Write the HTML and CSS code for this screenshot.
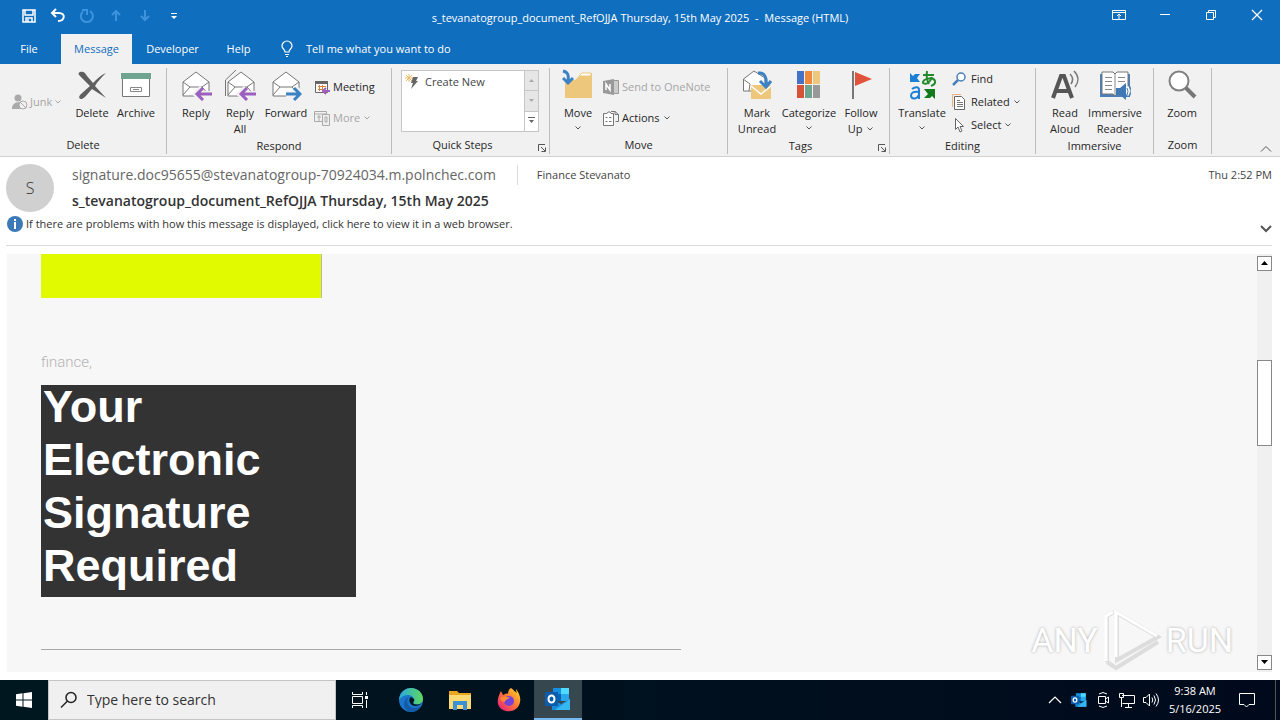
FILE: index.html
```html
<!DOCTYPE html>
<html lang="en">
<head>
    <meta charset="UTF-8">
    <title>s_tevanatogroup_document_RefOJJA Thursday, 15th May 2025 - Message (HTML)</title>
    <link rel="stylesheet" href="styles.css">
</head>
<body>
    <svg class="defs" aria-hidden="true">
        <symbol id="envelope" viewBox="0 0 32 32">
            <path d="M3 13 16 3 29 13V27H3Z" fill="#fff" stroke="#777"/>
            <path d="M3 13 10 18H22L29 13M10 18 3 26M22 18 29 26" fill="none" stroke="#777"/>
        </symbol>
        <symbol id="arrow-down" viewBox="0 0 8 8">
            <path d="M1.5 2.5 4 5 6.5 2.5" fill="none" stroke="currentColor"/>
        </symbol>
        <symbol id="launcher" viewBox="0 0 10 10">
            <path d="M1.5 8V1.5H8M4 4 8 8M8.5 4.5V8.5H4.5" fill="none" stroke="#555"/>
        </symbol>
        <symbol id="outlook" viewBox="0 0 26 24">
            <path d="M8 1H24V14H8Z" fill="#1490df"/>
            <path d="M16 1H24V7H16Z" fill="#50d9ff"/>
            <path d="M8 7H16V14H8Z" fill="#0364b8"/>
            <path d="M16 7H24V14H16Z" fill="#28a8ea"/>
            <path d="M7 12 16 17 25 12V23H7Z" fill="#1b8ad8"/>
            <path d="M25 12V23H10Z" fill="#35b8f1"/>
            <rect x="0" y="5" width="13" height="14" rx="1" fill="#0a5cad"/>
            <ellipse cx="6.5" cy="12" rx="3" ry="3.5" fill="none" stroke="#fff" stroke-width="2"/>
        </symbol>
    </svg>

    <header class="titlebar">
        <div class="quick-access">
            <button aria-label="Save"><svg width="16" height="16" fill="none" stroke="#fff" stroke-width="1.5"><path d="M2 2H14V14H2ZM4 2V7H12V2M5 14V10H11V14M7 11V14"/></svg></button>
            <button aria-label="Undo"><svg width="16" height="16" fill="none" stroke="#fff" stroke-width="2"><path d="M6 1 2 5 6 9M2 5H9C16 5 15 13 8 13"/></svg></button>
            <button aria-label="Redo" disabled><svg width="16" height="16" fill="none" stroke="#3d94dc" stroke-width="2"><path d="M4 3.5A6 6 0 1 0 11 3M3 2H8V7"/></svg></button>
            <button aria-label="Previous item" disabled><svg width="16" height="16" fill="none" stroke="#3d94dc" stroke-width="2"><path d="M8 13V3M4 7 8 3 12 7"/></svg></button>
            <button aria-label="Next item" disabled><svg width="16" height="16" fill="none" stroke="#3d94dc" stroke-width="2"><path d="M8 2V12M4 8 8 12 12 8"/></svg></button>
            <button aria-label="Customize"><svg width="8" height="8" fill="#fff"><path d="M1 1H7V2H1ZM1 4H7L4 7Z"/></svg></button>
        </div>
        <div class="title">s_tevanatogroup_document_RefOJJA Thursday, 15th May 2025&nbsp; -&nbsp; Message (HTML)</div>
        <div class="window-controls">
            <button aria-label="Ribbon display options"><svg width="14" height="12" fill="none" stroke="#fff"><path d="M.5 1.5H13.5V10.5H.5ZM.5 3.5H13.5M7 10V5M5 7 7 5 9 7"/></svg></button>
            <button aria-label="Minimize"><svg width="12" height="12" stroke="#fff"><path d="M1 5.5H11"/></svg></button>
            <button aria-label="Restore"><svg width="12" height="12" fill="none" stroke="#fff"><path d="M1.5 3.5H8.5V10.5H1.5ZM3.5 3.5V1.5H10.5V8.5H8.5"/></svg></button>
            <button aria-label="Close"><svg width="12" height="12" stroke="#fff" stroke-width="1.2"><path d="M1 1 11 11M11 1 1 11"/></svg></button>
        </div>
    </header>

    <nav class="tabs">
        <a href="#" class="tab tab-file">File</a>
        <a href="#" class="tab tab-message active">Message</a>
        <a href="#" class="tab tab-developer">Developer</a>
        <a href="#" class="tab tab-help">Help</a>
        <a href="#" class="tell-me">
            <svg width="14" height="18" fill="none" stroke="#fff" stroke-width="1.2"><path d="M5 12C5 9 2 9 2 6A5 5 0 0 1 12 6C12 9 9 9 9 12ZM5 14.5H9M6 16.5H8"/></svg>
            Tell me what you want to do
        </a>
    </nav>

    <div class="ribbon">
        <section class="group group-delete">
            <div class="group-items">
                <div class="small-list junk">
                    <button class="small" disabled><svg width="16" height="16"><circle cx="6" cy="4" r="3.5" fill="#aaa"/><path d="M0 14C0 8 9 7 10 10V15H0Z" fill="#aaa"/><circle cx="11" cy="11" r="4" fill="#f1f1f1" stroke="#aaa"/><path d="M8 8 14 14" stroke="#aaa"/></svg>Junk<svg class="caret"><use href="#arrow-down"/></svg></button>
                </div>
                <button class="large"><svg width="32" height="32"><path d="M4 3C7 2 9 3 11 7L17 14C21 10 25 6 30 4 25 9 21 13 19 17L30 29 16 20C12 24 10 28 6 30 3 30 2 28 5 25L14 17 4 7C2 5 2 4 4 3Z" fill="#5f5f5f"/></svg>Delete</button>
                <button class="large"><svg width="32" height="32"><path d="M2.5 9.5H29.5V27.5H2.5Z" fill="#fff" stroke="#777"/><path d="M1 4H31V10H1Z" fill="#6fa491"/><path d="M10.5 18.5H21.5V22.5H10.5ZM13 20.5H19" fill="none" stroke="#888"/></svg>Archive</button>
            </div>
            <h2>Delete</h2>
        </section>

        <section class="group group-respond">
            <div class="group-items">
                <button class="large"><svg width="32" height="32"><use href="#envelope"/><path d="M16 25H32M22 19 16 25 22 31" fill="none" stroke="#f1f1f1" stroke-width="6"/><path d="M17 25H32M23 19 17 25 23 31" fill="none" stroke="#9b5fc0" stroke-width="3"/></svg>Reply</button>
                <button class="large"><svg width="32" height="32"><path d="M1.5 27V11L12 1" fill="none" stroke="#777"/><use href="#envelope" x="1"/><path d="M16 25H32M22 19 16 25 22 31" fill="none" stroke="#f1f1f1" stroke-width="6"/><path d="M17 25H32M23 19 17 25 23 31" fill="none" stroke="#9b5fc0" stroke-width="3"/></svg>Reply<br>All</button>
                <button class="large wide"><svg width="32" height="32"><use href="#envelope"/><path d="M16 25H31M25 19 31 25 25 31" fill="none" stroke="#f1f1f1" stroke-width="6"/><path d="M16 25H30M24 19 30 25 24 31" fill="none" stroke="#3b82c4" stroke-width="3"/></svg>Forward</button>
                <div class="small-list">
                    <button class="small"><svg width="16" height="16"><path d="M1.5 3.5H13.5V13.5H1.5Z" fill="#fff" stroke="#666"/><path d="M1 2H14V5H1Z" fill="#666"/><path d="M4 7.5H12M4 10.5H9M5.5 6V12M8.5 6V12" stroke="#d9833c"/><path d="M16 12H9M12 9 9 12 12 15" fill="none" stroke="#9b5fc0" stroke-width="2"/></svg>Meeting</button>
                    <button class="small" disabled><svg width="16" height="16" fill="none" stroke="#aaa"><path d="M.5 1.5H12.5V11.5H.5ZM1 4H12M3 7H7M5 5V11" /><path d="M8.5 4.5H15.5V15.5H8.5Z" fill="#eee"/><path d="M11 7H13V12H11Z"/></svg>More<svg class="caret"><use href="#arrow-down"/></svg></button>
                </div>
            </div>
            <h2>Respond</h2>
        </section>

        <section class="group group-steps">
            <div class="group-items">
                <div class="gallery">
                    <button class="step"><svg width="16" height="16"><path d="M4 0V8M0 4H8M1 1 7 7M7 1 1 7" stroke="#eeb868"/><path d="M8 3H13L11 7H13L6 15 8 9H6Z" fill="#666"/></svg>Create New</button>
                    <div class="gallery-scroll">
                        <button disabled aria-label="Scroll up"><svg width="7" height="7" fill="#aaa"><path d="M1 5H6L3.5 2Z"/></svg></button>
                        <button disabled aria-label="Scroll down"><svg width="7" height="7" fill="#aaa"><path d="M1 2H6L3.5 5Z"/></svg></button>
                        <button aria-label="More steps"><svg width="7" height="8" fill="#666"><path d="M0 0H7V1H0ZM1 3H6L3.5 6Z"/></svg></button>
                    </div>
                </div>
            </div>
            <h2>Quick Steps</h2>
            <button class="launcher" aria-label="Manage quick steps"><svg width="10" height="10"><use href="#launcher"/></svg></button>
        </section>

        <section class="group group-move">
            <div class="group-items">
                <button class="large wide"><svg width="32" height="32"><path d="M3 11H13L18 6 20 4H30V29H3Z" fill="#ecc77c"/><path d="M18 6 20 4H29V7H17Z" fill="#fff" stroke="#ecc77c"/><path d="M1 2C6 3 7 6 6 13M1 9 6 14 11 9" fill="none" stroke="#3b82c4" stroke-width="3"/></svg>Move<svg class="caret"><use href="#arrow-down"/></svg></button>
                <div class="small-list">
                    <button class="small" disabled><svg width="16" height="16"><path d="M5 1.5H15.5V14.5H5" fill="#ccc" stroke="#999"/><path d="M0 2 11 0V16L0 14Z" fill="#999"/><path d="M3 11V5L7 11V5" fill="none" stroke="#fff" stroke-width="1.5"/></svg>Send to OneNote</button>
                    <button class="small"><svg width="16" height="16" fill="none" stroke="#777"><path d="M.5 3.5H4L5 2H7L8 3.5H10.5V15.5H.5Z" fill="#fff"/><path d="M2.5 7.5H4.500M2.5 11.5H4.500M6 7.5H8.500M6 11.5H8.500M8 1.5H12L15.5 4.500V11.5H12.500M12 1.5V4.500H15.5"/></svg>Actions<svg class="caret"><use href="#arrow-down"/></svg></button>
                </div>
            </div>
            <h2>Move</h2>
        </section>

        <section class="group group-tags">
            <div class="group-items">
                <button class="large"><svg width="32" height="32"><path d="M2.5 10 13 2 24 9V22H2.5Z" fill="#fff" stroke="#777"/><path d="M2 10 9 15 8 22" fill="none" stroke="#777"/><path d="M10 16H30V30H10Z" fill="#ecc77c"/><path d="M10 17 20 25 30 17" fill="none" stroke="#fff" stroke-width="1.5"/><path d="M17 4C24 3 26 9 25 17M19 12 25 18 30 12" fill="none" stroke="#3b82c4" stroke-width="3"/></svg>Mark<br>Unread</button>
                <button class="large widest"><svg width="32" height="32"><path d="M4 2H11V15H4Z" fill="#4472c4"/><path d="M12 2H19V15H12Z" fill="#ef8a3c"/><path d="M20 2H27V15H20Z" fill="#ecc77c"/><path d="M4 16H11V29H4Z" fill="#d6533a"/><path d="M12 16H19V29H12Z" fill="#6fa491"/><path d="M20 16H27V29H20Z" fill="#999"/></svg>Categorize<svg class="caret"><use href="#arrow-down"/></svg></button>
                <button class="large"><svg width="32" height="32"><path d="M8 2V30" stroke="#777" stroke-width="2"/><path d="M10 3 27 10 10 17Z" fill="#e0523b"/></svg>Follow<span>Up<svg class="caret"><use href="#arrow-down"/></svg></span></button>
            </div>
            <h2>Tags</h2>
            <button class="launcher" aria-label="Tag options"><svg width="10" height="10"><use href="#launcher"/></svg></button>
        </section>

        <section class="group group-editing">
            <div class="group-items">
                <button class="large wide"><svg width="32" height="32"><path d="M4 4 7 7 9 5H14L11 9 14 13H4Z" fill="#1b7fd6"/><path d="M6 20C10 17 13 18 13 21V30M13 23C7 22 5 24 5 27 6 31 11 30 13 26" fill="none" stroke="#1b7fd6" stroke-width="2"/><path d="M17 6H28M21 2C20 9 21 12 23 15M26 8C24 14 20 16 17 14 16 10 27 7 29 12 30 15 27 16 25 17" fill="none" stroke="#23892b" stroke-width="2"/><path d="M18 20H29V30L26 27 24 29H18L22 25Z" fill="#117a1c"/></svg>Translate<svg class="caret"><use href="#arrow-down"/></svg></button>
                <div class="small-list three">
                    <button class="small"><svg width="16" height="16" fill="none" stroke="#4a7fba"><circle cx="9" cy="6" r="4" fill="#fff" stroke-width="1.5"/><path d="M6 9 1 14" stroke-width="2.5"/></svg>Find</button>
                    <button class="small"><svg width="16" height="16" fill="none"><path d="M.5 13V.5H9" stroke="#edb282"/><path d="M2.5 2.5H9.5L12.5 5.5V15.5H2.5Z" fill="#fff" stroke="#666"/><path d="M5 6.5H8M5 8.5H11M5 10.5H11M5 12.5H11" stroke="#777"/></svg>Related<svg class="caret"><use href="#arrow-down"/></svg></button>
                    <button class="small"><svg width="16" height="16"><path d="M3.5 1.5V12.5L6 10 8 15 10 14 8 9.5H11.5Z" fill="#fff" stroke="#666"/></svg>Select<svg class="caret"><use href="#arrow-down"/></svg></button>
                </div>
            </div>
            <h2>Editing</h2>
        </section>

        <section class="group group-immersive">
            <div class="group-items">
                <button class="large"><svg width="32" height="32"><path d="M4 29 12 7H15L23 29M7 22H20" fill="none" stroke="#555" stroke-width="4"/><path d="M21 5C24 8 24 12 22 15M25 2C30 7 30 13 26 18" fill="none" stroke="#777" stroke-width="1.5"/></svg>Read<br>Aloud</button>
                <button class="large wider"><svg width="32" height="32"><path d="M1 5H31V28H1Z" fill="#4a7fba"/><path d="M3 3H14L16 5 18 3H29V25H18L16 27 14 25H3Z" fill="#fff" stroke="#777"/><path d="M16 5V26M6 8.5H13M6 12.5H13M6 16.5H13M6 20.5H13M19 8.5H26M19 12.5H26" stroke="#888"/><path d="M17 19H21L27 14V31L21 26H17Z" fill="#3f78b5"/><path d="M28 18Q31 22 28 26" fill="none" stroke="#fff" stroke-width="3"/><path d="M28 19Q30 22 28 26M30 16Q34 22 30 28" fill="none" stroke="#3f78b5"/></svg>Immersive<br>Reader</button>
            </div>
            <h2>Immersive</h2>
        </section>

        <section class="group group-zoom">
            <div class="group-items">
                <button class="large wider"><svg width="32" height="32"><circle cx="13" cy="12" r="9.5" fill="#fff" stroke="#808080" stroke-width="2"/><path d="M20 19 29 28" stroke="#777" stroke-width="4"/></svg>Zoom</button>
            </div>
            <h2>Zoom</h2>
        </section>
        <button class="collapse" aria-label="Collapse the ribbon"><svg width="12" height="8" fill="none" stroke="#555"><path d="M1 6.5 6 1.5 11 6.5"/></svg></button>
    </div>

    <section class="message-head">
        <div class="envelope-info">
            <div class="avatar">S</div>
            <div class="lines">
                <div class="people">
                    <span class="from">signature.doc95655@stevanatogroup-70924034.m.polnchec.com</span>
                    <span class="to">Finance Stevanato</span>
                    <time>Thu 2:52 PM</time>
                </div>
                <h1>s_tevanatogroup_document_RefOJJA Thursday, 15th May 2025</h1>
            </div>
        </div>
        <div class="notice">
            <svg width="16" height="16"><circle cx="8" cy="8" r="8" fill="#3b79b7"/><path d="M7 3H9V5H7ZM7 6H9V13H7Z" fill="#fff"/></svg>
            <a href="#">If there are problems with how this message is displayed, click here to view it in a web browser.</a>
            <button aria-label="Expand header"><svg width="12" height="8" fill="none" stroke="#555" stroke-width="2"><path d="M1 1 6 6 11 1"/></svg></button>
        </div>
    </section>

    <main class="message">
        <article class="mail">
            <div class="banner"></div>
            <p>finance,</p>
            <div class="callout">
                <h2>Your Electronic Signature Required</h2>
            </div>
            <hr>
            <div class="watermark">
                <span>ANY</span>
                <svg width="60" height="64" fill="none" stroke-width="4">
                    <g stroke="#ddd"><path d="M5 54V8L12 4M5 54 14 60 56 34M15 50V5L56 29 15 52Z"/></g>
                    <g stroke="#fff" stroke-width="3"><path d="M4 53V8L11 4M14 49V4L55 28"/></g>
                </svg>
                <span>RUN</span>
            </div>
        </article>
        <div class="scrollbar">
            <button aria-label="Scroll up"><svg width="7" height="5"><path d="M0 4H7L3.5 0Z"/></svg></button>
            <div class="track"><div class="thumb"></div></div>
            <button aria-label="Scroll down"><svg width="7" height="5"><path d="M0 0H7L3.5 4Z"/></svg></button>
        </div>
    </main>

    <footer class="taskbar">
        <button class="start" aria-label="Start"><svg width="16" height="16" fill="#fff"><path d="M0 2.2 6.5 1.3V7.5H0ZM7.5 1.2 16 0V7.5H7.5ZM0 8.5H6.5V14.7L0 13.8ZM7.5 8.5H16V16L7.5 14.8Z"/></svg></button>
        <label class="search">
            <svg width="18" height="18" fill="none" stroke="#222" stroke-width="1.5"><circle cx="11" cy="6.5" r="5"/><path d="M7.5 10 1 16.5"/></svg>
            <input type="text" placeholder="Type here to search" aria-label="Type here to search">
        </label>
        <div class="apps">
            <button aria-label="Task view"><svg width="18" height="16" fill="none" stroke="#fff"><path d="M1.5 0V2.5H11.5V0M1.5 4.5H11.5V11.5H1.5ZM1.5 16V13.5H11.5V16M15.5 0V3M15.5 8V16"/><path d="M14 4H17V7H14Z" fill="#fff" stroke="none"/></svg></button>
            <button aria-label="Edge"><svg width="26" height="26"><defs><linearGradient id="edge-top"><stop offset="0" stop-color="#27a9e1"/><stop offset="1" stop-color="#60d85c"/></linearGradient></defs><circle cx="13" cy="13" r="12" fill="#1976c9"/><path d="M1 13C2 4 8 1 13 1 20 1 25 6 25 12 25 16 21 18 17 17 14 16 17 14 16 12 14 6 5 7 1 13Z" fill="url(#edge-top)"/><path d="M11 10C7 14 10 21 16 21 19 21 21 20 23 19 20 24 14 26 10 24 4 21 5 12 11 10Z" fill="#145aa7"/><path d="M13 10C10 12 11 18 17 19 20 19 22 18 24 16 21 18 16 18 15 16 15 15 17 14 16 12Z" fill="#001720"/></svg></button>
            <button aria-label="File Explorer"><svg width="24" height="24"><path d="M1 3H9L11 5H23V21H1Z" fill="#e8a623"/><path d="M1 7H23V21H1Z" fill="#ffda73"/><path d="M5 13H19V22H15V17H9V22H5Z" fill="#3a91d5"/></svg></button>
            <button aria-label="Firefox"><svg width="26" height="26"><defs><linearGradient id="fox" x1="1" y1="0" x2="0" y2="1"><stop offset="0" stop-color="#ffe226"/><stop offset=".5" stop-color="#ff7139"/><stop offset="1" stop-color="#e31587"/></linearGradient></defs><path d="M15 1C18 3 19 5 21 6 20 4 20 3 20 2 23 6 25 10 24 15 22 27 5 27 2 17 1 12 3 8 5 4L7 8C9 7 11 6 12 7 12 4 13 2 15 1Z" fill="url(#fox)"/><circle cx="13" cy="14" r="5" fill="#7542d8"/><path d="M4 11C8 8 10 11 14 10 12 13 9 12 9 15 7 15 5 14 4 11Z" fill="#ff8a32"/></svg></button>
            <button class="running" aria-label="Outlook"><svg width="26" height="24"><use href="#outlook"/></svg></button>
        </div>
        <div class="tray">
            <button aria-label="Show hidden icons"><svg width="14" height="10" fill="none" stroke="#fff" stroke-width="1.2"><path d="M1 8 7 2 13 8"/></svg></button>
            <button aria-label="Outlook"><svg width="16" height="16"><use href="#outlook"/></svg></button>
            <button aria-label="Meet now"><svg width="14" height="18" fill="none" stroke="#fff"><path d="M2.5 5.5H9.5V12.5H2.5ZM9.5 8 12.5 6V12L9.5 10M3 3Q7 0 11 3M3 15Q7 18 11 15"/></svg></button>
            <button aria-label="Network"><svg width="18" height="16" fill="none" stroke="#fff"><path d="M4 3.5H16.5V11.5H4.5M10.5 12V15M7 15.5H14M1.5 1.5H5.5V5.5H1.5ZM3.5 6V15"/></svg></button>
            <button aria-label="Volume"><svg width="18" height="16" fill="none" stroke="#fff"><path d="M1.5 5.5H4L7.5 2V14L4 10.5H1.5ZM10 5.5Q11.5 8 10 10.5M12 3.5Q15 8 12 12.5M14 1.5Q19 8 14 14.5"/></svg></button>
            <div class="clock"><div>9:38 AM</div><div>5/16/2025</div></div>
            <button class="notifications" aria-label="Notifications"><svg width="18" height="18" fill="none" stroke="#fff"><path d="M1.5 2.5H16.5V13.5H11L8.5 16 6 13.5H1.5Z"/></svg></button>
            <button class="show-desktop" aria-label="Show desktop"></button>
        </div>
    </footer>
</body>
</html>
```
FILE: styles.css
```css
* {
    box-sizing: border-box;
}
body {
    margin: 0;
    height: 100vh;
    display: flex;
    flex-direction: column;
    overflow: hidden;
    font-family: "Open Sans", "Noto Sans", sans-serif;
    font-size: 11px;
    line-height: 16px;
    color: #262626;
    background-color: #fff;
}
button {
    padding: 0;
    border: none;
    background: none;
    font: inherit;
    color: inherit;
    display: flex;
    align-items: center;
    justify-content: center;
}
a {
    color: inherit;
    text-decoration: none;
}
h1, h2, p {
    margin: 0;
    font-weight: normal;
}
svg {
    flex: none;
}
.defs {
    display: none;
}
.caret {
    width: 8px;
    height: 8px;
    color: #555;
}

/* title bar */
.titlebar {
    display: grid;
    grid-template-columns: 1fr auto 1fr;
    height: 34px;
    background-color: #106ebe;
    color: #fff;
    flex: none;
}
.quick-access {
    display: flex;
    padding-left: 14px;
    height: 32px;
}
.quick-access button {
    width: 29px;
}
.title {
    line-height: 36px;
}
.window-controls {
    display: flex;
    justify-content: flex-end;
    height: 30px;
}
.window-controls button {
    width: 46px;
}

.tabs {
    display: flex;
    height: 30px;
    background-color: #106ebe;
    color: #fff;
    line-height: 30px;
    flex: none;
}
.tab {
    text-align: center;
}
.tab-file {
    width: 58px;
    margin-right: 3px;
}
.tab-message {
    width: 71px;
}
.tab-developer {
    width: 81px;
}
.tab-help {
    width: 51px;
}
.tab.active {
    background-color: #f1f1f1;
    color: #106ebe;
}
.tell-me {
    display: flex;
    align-items: center;
    gap: 12px;
    padding-left: 16px;
}

/* ribbon */
.ribbon {
    display: flex;
    height: 93px;
    padding-top: 4px;
    background-color: #f1f1f1;
    border-bottom: 1px solid #d2d2d2;
    flex: none;
}
.group {
    position: relative;
    display: flex;
    flex-direction: column;
    height: 86px;
    border-right: 1px solid #bdbdbd;
    flex: none;
}
.group-items {
    display: flex;
    height: 72px;
}
.group h2 {
    font-size: 11px;
    line-height: 18px;
    text-align: center;
}
.group-delete {
    width: 167px;
}
.group-respond {
    width: 225px;
    padding: 0 7px;
}
.group-steps {
    width: 158px;
    padding: 2px 9px 0;
}
.group-steps .group-items {
    height: 70px;
}
.group-steps h2 {
    padding-right: 16px;
}
.group-move {
    width: 178px;
    padding: 0 4px;
}
.group-tags {
    width: 162px;
    padding: 0 7px;
}
.group-tags h2 {
    padding-right: 16px;
}
.group-editing {
    width: 146px;
    padding: 0 8px;
}
.group-immersive {
    width: 118px;
    padding: 0 7px;
}
.group-zoom {
    width: 58px;
}
.large {
    width: 44px;
    flex-direction: column;
    justify-content: flex-start;
    flex: none;
    padding-top: 1px;
    white-space: nowrap;
}
.large > svg:first-child {
    margin-bottom: 4px;
}
.large > .caret {
    margin-top: 3px;
}
.large.wide {
    width: 48px;
}
.large.wider {
    width: 56px;
}
.large.widest {
    width: 60px;
}
.large span .caret {
    margin-left: 4px;
}
.small-list {
    display: flex;
    flex-direction: column;
    padding: 3px 0 0 4px;
}
.group-move .small-list {
    padding-left: 1px;
}
.small {
    height: 31px;
    gap: 3px;
    justify-content: flex-start;
    white-space: nowrap;
}
.small:disabled {
    color: #a6a6a6;
}
.small:disabled .caret {
    color: #a6a6a6;
}
.small-list.three {
    padding: 0 0 0 6px;
}
.three .small {
    height: 22px;
    margin-bottom: 1px;
}
.small-list.junk {
    width: 70px;
    padding: 18px 0 0 12px;
}
.junk .small {
    gap: 2px;
}
.gallery {
    display: flex;
    width: 138px;
    height: 62px;
    background-color: #fff;
    border: 1px solid #c6c6c6;
}
.step {
    flex: 1;
    height: 22px;
    padding-left: 3px;
    gap: 4px;
    justify-content: flex-start;
    color: #444;
}
.gallery-scroll {
    display: flex;
    flex-direction: column;
    width: 14px;
    border-left: 1px solid #c6c6c6;
}
.gallery-scroll button {
    flex: 1;
}
.gallery-scroll button:disabled {
    background-color: #e6e6e6;
    border-bottom: 1px solid #c6c6c6;
}
.launcher {
    position: absolute;
    right: 2px;
    bottom: 1px;
}
.collapse {
    margin-left: auto;
    padding: 0 8px 3px 0;
    align-items: flex-end;
}

/* message header */
.message-head {
    margin: 0 8px 0 6px;
    padding-top: 7px;
    height: 89px;
    border-bottom: 1px solid #dcdcdc;
    flex: none;
}
.envelope-info {
    display: flex;
    gap: 18px;
}
.avatar {
    width: 48px;
    height: 48px;
    border-radius: 50%;
    background-color: #d0d0d0;
    font-size: 16px;
    font-weight: 300;
    line-height: 48px;
    text-align: center;
    color: #333;
}
.lines {
    flex: 1;
}
.people {
    display: flex;
    align-items: center;
    height: 22px;
    color: #444;
}
.from {
    font-size: 14px;
    padding-right: 21px;
    border-right: 1px solid #dcdcdc;
    line-height: 20px;
    color: #666;
}
.to {
    padding-left: 19px;
}
.people time {
    margin-left: auto;
}
.lines h1 {
    font-size: 14px;
    font-weight: 600;
    line-height: 30px;
    color: #333;
}
.notice {
    display: flex;
    align-items: center;
    gap: 3px;
    height: 16px;
    padding-left: 1px;
    color: #333;
}
.notice button {
    margin-left: auto;
    padding-top: 10px;
}

/* message body */
.message {
    display: flex;
    flex: 1;
    min-height: 0;
    margin: 8px 8px 8px 7px;
}
.mail {
    position: relative;
    flex: 1;
    padding-left: 34px;
    background-color: #f7f7f7;
}
.banner {
    width: 281px;
    height: 44px;
    background-color: #e1fa00;
    border-right: 1px solid #b8b8b8;
}
.mail p {
    margin-top: 53px;
    font-family: Roboto, sans-serif;
    font-weight: 300;
    font-size: 15px;
    line-height: 22px;
    color: #b4b4b4;
}
.callout {
    display: flow-root;
    width: 315px;
    margin-top: 12px;
    padding: 0 60px 5px 2px;
    background-color: #333;
}
.callout h2 {
    margin-top: -5px;
    color: #fff;
    font-family: "Liberation Sans", Arial, sans-serif;
    font-weight: bold;
    font-size: 45px;
    line-height: 53px;
}
.mail hr {
    width: 640px;
    margin: 52px 0 0;
    border: none;
    border-top: 1px solid #a8a8a8;
}
.watermark {
    position: absolute;
    right: 24px;
    bottom: 0;
    display: flex;
    align-items: center;
    gap: 4px;
    font-family: Roboto, sans-serif;
    font-size: 34px;
    line-height: 64px;
    color: #fff;
    text-shadow: 0 0 3px #aaa;
}
.scrollbar {
    display: flex;
    flex-direction: column;
    width: 15px;
    padding: 2px 0;
    background-color: #f0f0f0;
}
.scrollbar button {
    height: 15px;
    background-color: #fff;
    border: 1px solid #888;
}
.track {
    flex: 1;
    display: flex;
    flex-direction: column;
}
.track::before {
    content: "";
    flex: 89;
}
.track::after {
    content: "";
    flex: 210;
}
.thumb {
    flex: 85;
    background-color: #fff;
    border: 1px solid #888;
}

/* taskbar */
.taskbar {
    display: flex;
    height: 40px;
    background: linear-gradient(to right, #001720, #000a1c);
    color: #fff;
    flex: none;
}
.start {
    width: 48px;
}
.search {
    display: flex;
    align-items: center;
    gap: 9px;
    width: 288px;
    padding-left: 11px;
    background-color: #f0f0f0;
    border: 1px solid #c4c4c4;
}
.search input {
    flex: 1;
    min-width: 0;
    padding: 0;
    border: none;
    background: none;
    font: inherit;
    font-size: 14px;
}
.search input::placeholder {
    color: #333;
    opacity: 1;
}
.apps {
    display: flex;
    gap: 1px;
}
.apps button {
    width: 48px;
}
.apps button:first-child {
    margin-right: 2px;
}
.apps .running {
    background-color: #37474f;
    border-bottom: 2px solid #76b9ed;
}
.tray {
    display: flex;
    margin-left: auto;
}
.tray button {
    width: 24px;
}
.clock {
    width: 64px;
    padding-top: 2px;
    text-align: center;
    line-height: 18px;
}
.tray .notifications {
    width: 40px;
    margin-right: 8px;
}
.tray .show-desktop {
    width: 5px;
    border-left: 1px solid #555;
}
```
